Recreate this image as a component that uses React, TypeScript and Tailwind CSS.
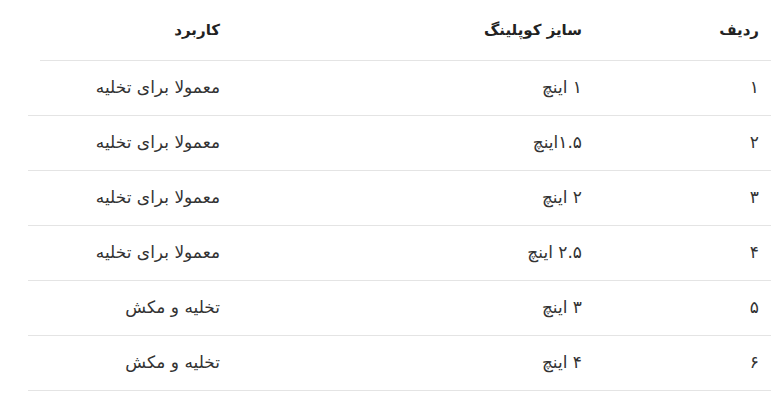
const rows = [
  { n: '۱', size: '۱ اینچ', use: 'معمولا برای تخلیه' },
  { n: '۲', size: '۱.۵اینچ', use: 'معمولا برای تخلیه' },
  { n: '۳', size: '۲ اینچ', use: 'معمولا برای تخلیه' },
  { n: '۴', size: '۲.۵ اینچ', use: 'معمولا برای تخلیه' },
  { n: '۵', size: '۳ اینچ', use: 'تخلیه و مکش' },
  { n: '۶', size: '۴ اینچ', use: 'تخلیه و مکش' },
];

export default function App() {
  return (
    <div
      dir="rtl"
      className="w-[776px] h-[408px] bg-white overflow-hidden pr-[5px] pl-[28px] font-['DejaVu_Sans',sans-serif]"
    >
      <div className="ml-[12px] h-[61px] border-b border-[#e4e4e4] grid grid-cols-[177px_362px_1fr] items-center text-[15px] font-bold text-[#222]">
        <div className="pr-3">ردیف</div>
        <div className="pr-3">سایز کوپلینگ</div>
        <div className="pr-3">کاربرد</div>
      </div>
      {rows.map((r) => (
        <div
          key={r.n}
          className="h-[55px] border-b border-[#e4e4e4] grid grid-cols-[177px_362px_1fr] items-center text-[17px] text-[#333]"
        >
          <div className="pr-3">{r.n}</div>
          <div className="pr-3">{r.size}</div>
          <div className="pr-3">{r.use}</div>
        </div>
      ))}
    </div>
  );
}
